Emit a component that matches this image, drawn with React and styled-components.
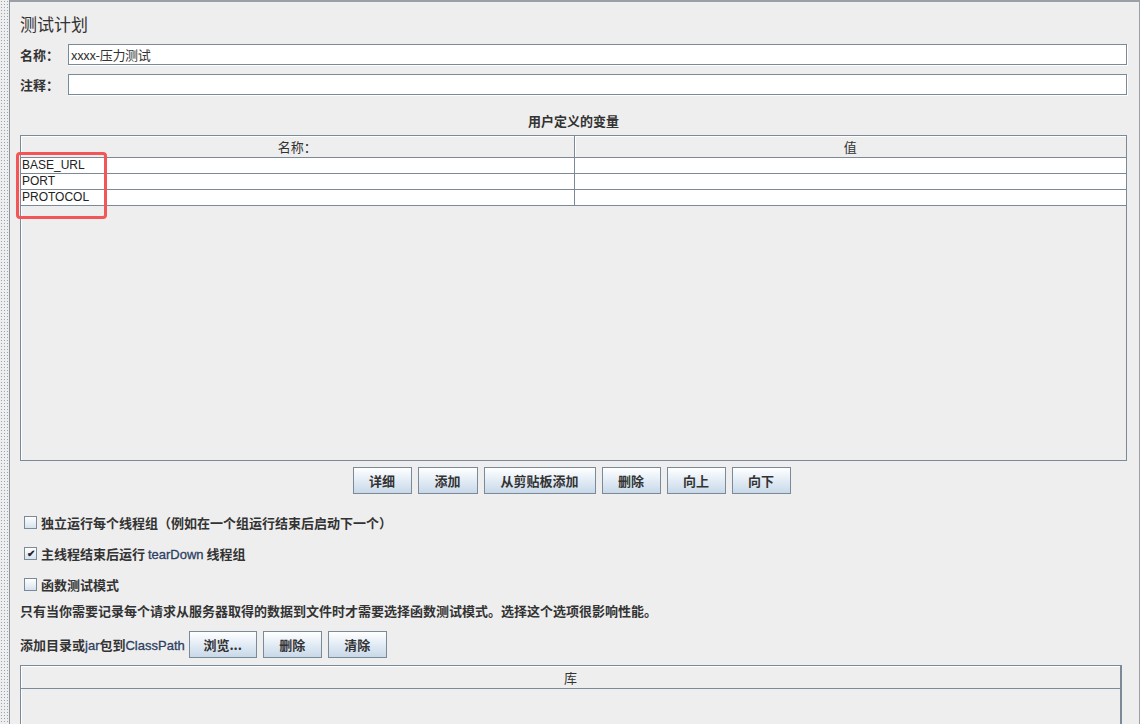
import React from 'react';
import styled, { createGlobalStyle, css } from 'styled-components';

const GlobalStyle = createGlobalStyle`
  html, body {
    margin: 0;
    padding: 0;
    background: #eeeeee;
    font-family: "Liberation Sans", "Noto Sans CJK SC", sans-serif;
    font-size: 12px;
    color: #333333;
  }
`;

const Frame = styled.div`
  display: flex;
  width: 1140px;
  height: 724px;
  overflow: hidden;
  background: #eeeeee;
`;

const DottedStrip = styled.div`
  width: 9px;
  flex-shrink: 0;
  background-image: radial-gradient(circle, #9aa4ae 0.6px, transparent 0.8px);
  background-size: 3px 3px;
  background-position: 3px 0;
  border-right: 1px solid #8a949e;
`;

const Panel = styled.div`
  flex: 1;
  display: flex;
  flex-direction: column;
  overflow: hidden;
  border-top: 2px solid #9aa0a6;
  border-right: 1px solid #9aa0a6;
  padding: 0 12px 0 10px;

  & > * {
    flex-shrink: 0;
  }
`;

const Title = styled.div`
  font-family: "Noto Sans CJK SC", sans-serif;
  font-size: 17px;
  line-height: 26px;
  margin-top: 9px;
  color: #333;
`;

const FieldRow = styled.div`
  display: flex;
  align-items: center;
  margin-top: ${({ top }) => top}px;
`;

const Label = styled.span`
  width: 48px;
  flex-shrink: 0;
  font-family: "Noto Sans CJK SC", sans-serif;
  font-weight: bold;
  font-size: 13px;
`;

const TextInput = styled.div`
  flex: 1;
  height: 19px;
  background: #fff;
  border: 1px solid #7a8a99;
  box-shadow: 1px 1px 0 #fff;
  font-family: "Noto Sans CJK SC", sans-serif;
  font-size: 13px;
  line-height: 19px;
  padding-left: 2px;
  letter-spacing: -0.3px;
`;

const SectionTitle = styled.div`
  text-align: center;
  font-family: "Noto Sans CJK SC", sans-serif;
  font-weight: bold;
  font-size: 13px;
  line-height: 18px;
  margin-top: 17px;
`;

const TableBox = styled.div`
  position: relative;
  display: flex;
  flex-direction: column;
  border: 1px solid #7a8a99;
  box-shadow: inset 1px 1px 0 #fff;
  height: ${({ h }) => h}px;
  margin-top: ${({ top }) => top}px;
  box-sizing: border-box;
  ${({ narrow }) =>
    narrow &&
    css`
      margin-right: 5px;
      border-right-width: 2px;
    `}
`;

const HeaderRow = styled.div`
  display: grid;
  grid-template-columns: ${({ cols }) => cols};
  height: ${({ h }) => h}px;
  border-bottom: 1px solid #7a8a99;
  flex-shrink: 0;
`;

const HeaderCell = styled.div`
  display: flex;
  align-items: center;
  justify-content: center;
  font-family: "Noto Sans CJK SC", sans-serif;
  font-size: 13px;
  box-shadow: inset 1px 1px 0 #fff;
  & + & {
    border-left: 1px solid #7a8a99;
  }
`;

const DataRow = styled.div`
  display: grid;
  grid-template-columns: 1fr 1fr;
  height: 15px;
  flex-shrink: 0;
  background: #fff;
  border-bottom: 1px solid #7a8a99;
`;

const DataCell = styled.div`
  font-size: 12px;
  line-height: 15px;
  padding-left: 1px;
  color: #222;
  & + & {
    border-left: 1px solid #7a8a99;
  }
`;

const Highlight = styled.div`
  position: absolute;
  left: -5px;
  top: 16px;
  width: 85px;
  height: 61px;
  border: 3px solid #f35656;
  border-radius: 4px;
`;

const ButtonBar = styled.div`
  display: flex;
  justify-content: center;
  gap: 6px;
  margin-top: 6px;
  padding-right: 4px;
`;

const Button = styled.div`
  height: 25px;
  min-width: ${({ w }) => w || 57}px;
  box-sizing: content-box;
  border: 1px solid #7a8a99;
  background: linear-gradient(#ffffff, #dde8f3 60%, #c9d8e8);
  display: flex;
  align-items: center;
  justify-content: center;
  font-family: "Noto Sans CJK SC", sans-serif;
  font-weight: bold;
  font-size: 13px;
  color: #333;
`;

const CheckRow = styled.label`
  display: flex;
  align-items: center;
  gap: 4px;
  height: 20px;
  margin-top: ${({ top }) => top}px;
  padding-left: 4px;
  font-family: "Noto Sans CJK SC", sans-serif;
  font-weight: bold;
  font-size: 13px;
`;

const Box = styled.span`
  width: 11px;
  height: 11px;
  border: 1px solid #7a8a99;
  background: linear-gradient(#ffffff, #d6e2ee);
  display: flex;
  align-items: center;
  justify-content: center;
  font-size: 10px;
  line-height: 10px;
  color: #223;
`;

const Latin = styled.span`
  font-family: "Liberation Sans", sans-serif;
  font-weight: normal;
  color: #2d3f63;
  font-size: 13px;
  -webkit-text-stroke: 0.3px #2d3f63;
`;

const Note = styled.div`
  font-family: "Noto Sans CJK SC", sans-serif;
  font-weight: bold;
  font-size: 13px;
  line-height: 18px;
  margin-top: 8px;
`;

const PathRow = styled.div`
  display: flex;
  align-items: center;
  gap: 6px;
  margin-top: 11px;
`;

const PathLabel = styled.span`
  font-family: "Noto Sans CJK SC", sans-serif;
  font-weight: bold;
  font-size: 13px;
  margin-right: -2px;
`;

const Empty = styled.div`
  flex: 1;
`;

const variables = ['BASE_URL', 'PORT', 'PROTOCOL'];

const Checkbox = ({ checked, children, top }) => (
  <CheckRow top={top}>
    <Box>{checked ? '✔' : ''}</Box>
    <span>{children}</span>
  </CheckRow>
);

const App = () => (
  <>
    <GlobalStyle />
    <Frame>
      <DottedStrip />
      <Panel>
        <Title>测试计划</Title>
        <FieldRow top={7}>
          <Label>名称：</Label>
          <TextInput>xxxx-压力测试</TextInput>
        </FieldRow>
        <FieldRow top={9}>
          <Label>注释：</Label>
          <TextInput />
        </FieldRow>
        <SectionTitle>用户定义的变量</SectionTitle>
        <TableBox h={326} top={5}>
          <HeaderRow cols="1fr 1fr" h={21}>
            <HeaderCell>名称：</HeaderCell>
            <HeaderCell>值</HeaderCell>
          </HeaderRow>
          {variables.map(name => (
            <DataRow key={name}>
              <DataCell>{name}</DataCell>
              <DataCell />
            </DataRow>
          ))}
          <Empty />
          <Highlight />
        </TableBox>
        <ButtonBar>
          <Button>详细</Button>
          <Button w={58}>添加</Button>
          <Button w={110}>从剪贴板添加</Button>
          <Button>删除</Button>
          <Button>向上</Button>
          <Button>向下</Button>
        </ButtonBar>
        <Checkbox top={18}>独立运行每个线程组（例如在一个组运行结束后启动下一个）</Checkbox>
        <Checkbox checked top={11}>
          主线程结束后运行 <Latin>tearDown</Latin> 线程组
        </Checkbox>
        <Checkbox top={11}>函数测试模式</Checkbox>
        <Note>只有当你需要记录每个请求从服务器取得的数据到文件时才需要选择函数测试模式。选择这个选项很影响性能。</Note>
        <PathRow>
          <PathLabel>
            添加目录或<Latin>jar</Latin>包到<Latin>ClassPath</Latin>
          </PathLabel>
          <Button w={66}>浏览...</Button>
          <Button>删除</Button>
          <Button>清除</Button>
        </PathRow>
        <TableBox narrow h={120} top={7}>
          <HeaderRow cols="1fr" h={22}>
            <HeaderCell>库</HeaderCell>
          </HeaderRow>
          <Empty />
        </TableBox>
      </Panel>
    </Frame>
  </>
);

export default App;
